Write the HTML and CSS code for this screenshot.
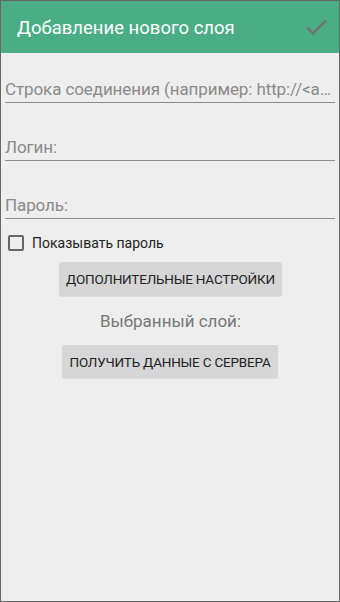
FILE: index.html
```html
<!DOCTYPE html>
<html lang="ru">
<head>
<meta charset="utf-8">
<link rel="stylesheet" href="styles.css">
</head>
<body>
<div class="screen">
  <header class="appbar">
    <div class="title">Добавление нового слоя</div>
    <svg class="check" width="24" height="24" viewBox="0 0 24 24"><path d="M3 11.5 L9 17.5 L22 4.5" fill="none" stroke="#6e7671" stroke-width="2.6"/></svg>
  </header>
  <main class="content">
    <div class="field first"><span class="hint">Строка соединения (например: http://&lt;a…</span></div>
    <div class="field"><span class="hint">Логин:</span></div>
    <div class="field"><span class="hint">Пароль:</span></div>
    <label class="checkrow"><span class="box"></span><span class="label">Показывать пароль</span></label>
    <div class="center"><button class="btn btn1">ДОПОЛНИТЕЛЬНЫЕ НАСТРОЙКИ</button></div>
    <div class="selected">Выбранный слой:</div>
    <div class="center"><button class="btn btn2">ПОЛУЧИТЬ ДАННЫЕ С СЕРВЕРА</button></div>
  </main>
</div>
</body>
</html>
```

FILE: styles.css
```css
html, body {
  margin: 0;
  padding: 0;
}
body {
  font-family: Roboto, "Noto Sans", sans-serif;
  background: #eeeeee;
}
.screen {
  box-sizing: border-box;
  width: 340px;
  height: 602px;
  border: 1px solid #666666;
  background: #eeeeee;
  overflow: hidden;
}
.appbar {
  height: 52px;
  background: #4aad86;
  display: flex;
  align-items: center;
  justify-content: space-between;
  padding: 0 11px 0 16px;
}
.title {
  color: #ffffff;
  font-size: 18.5px;
  line-height: 1;
  padding-top: 3px;
}
.check {
  display: block;
  margin-top: 2px;
}
.content {
  display: flex;
  flex-direction: column;
}
.field {
  margin: 0 4px;
  height: 56px;
  box-sizing: border-box;
  border-bottom: 1.5px solid #8c8c8c;
  display: flex;
  align-items: flex-end;
  padding-bottom: 3px;
  margin-top: 2px;
}
.field.first {
  height: 50px;
  margin-top: 0;
}
.hint {
  font-size: 17px;
  color: #8a8a8a;
  white-space: nowrap;
  line-height: 20px;
  letter-spacing: -0.1px;
}
.checkrow {
  display: flex;
  align-items: center;
  margin: 15px 0 0 7px;
  height: 17px;
}
.box {
  box-sizing: border-box;
  width: 16px;
  height: 16px;
  border: 2px solid #666666;
  border-radius: 2px;
}
.label {
  font-size: 14px;
  color: #222222;
  margin-left: 8px;
}
.center {
  display: flex;
  justify-content: center;
}
.btn {
  border: none;
  background: #d6d6d6;
  border-radius: 2px;
  font-family: Roboto, "Noto Sans", sans-serif;
  font-size: 13.5px;
  color: #222222;
  height: 34px;
  padding: 0;
  white-space: nowrap;
  letter-spacing: -0.2px;
  box-shadow: 0 1px 1px rgba(0,0,0,0.08);
}
.btn1 {
  margin-top: 11px;
  width: 223px;
  margin-left: 1px;
}
.btn2 {
  width: 216px;
  height: 33px;
}
.selected {
  text-align: center;
  font-size: 17px;
  color: #777777;
  margin: 15px 0 14px 1px;
  line-height: 20px;
}
```
